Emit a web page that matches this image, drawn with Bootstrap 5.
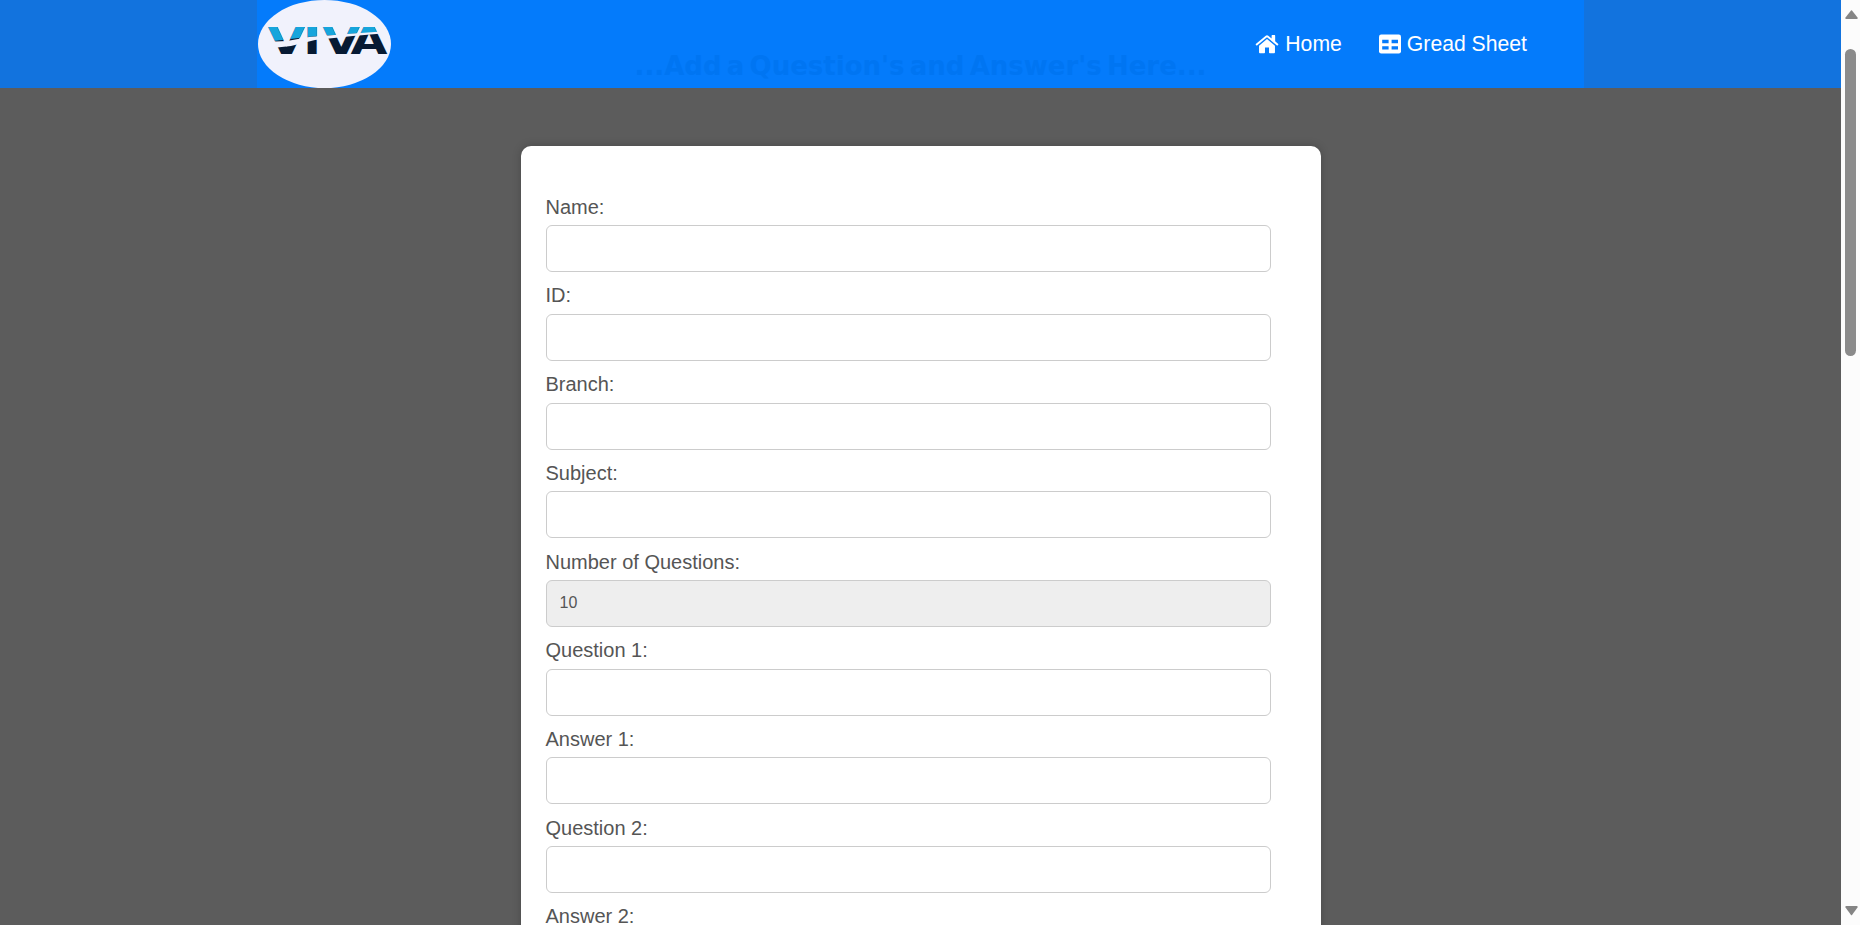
<!DOCTYPE html>
<html lang="en">
<head>
<meta charset="utf-8">
<meta name="viewport" content="width=device-width, initial-scale=1">
<title>Viva</title>
<link href="https://cdn.jsdelivr.net/npm/bootstrap@5.3.0/dist/css/bootstrap.min.css" rel="stylesheet">
<style>
html, body { height: 100%; }
body { font-family: "Liberation Sans", Arial, sans-serif; background: #5c5c5c; color: #555; overflow: hidden; }
.topbar { height: 88px; background: #1273de; }
.topbar-inner { width: 1327px; background: #047bfb; padding-right: 57px; overflow: hidden; }
.topbar .nav-link { color: #fff; font-size: 21.2px; line-height: 24px; gap: 6px; padding: 0; }
.topbar .nav { gap: 37px; }
.page-heading { top: 48px; left: 0; right: 0; font: bold 26px/36px "DejaVu Sans", sans-serif; word-spacing: -3.8px; color: #0075f2; white-space: nowrap; text-align: center; }
.question-card { width: 800px; height: 1900px; margin-top: 58px; padding: 48.8px 50px 0 25px; border-radius: 10px; background: #fff; box-shadow: 0 0 10px rgba(0,0,0,.2); }
.field { height: 88.7px; }
.field label { font-size: 20px; line-height: 24px; margin-bottom: 6.4px; display: block; }
.field .form-control { height: 47px; border: 1px solid #ccc; border-radius: 6px; padding: 0 13px; font-size: 16px; color: #555; }
.field .form-control:disabled { background: #eee; }
.scroll-rail { width: 19px; background: #fcfcfc; padding: 10px 4px 7px; }
.scroll-thumb { width: 11px; height: 307px; margin-top: 30px; border-radius: 6px; background: #8b8b8b; }
</style>
</head>
<body class="d-flex">
<div class="flex-grow-1 overflow-hidden">
  <header class="topbar d-flex justify-content-center">
    <div class="topbar-inner position-relative d-flex align-items-center justify-content-between">
      <div class="page-heading position-absolute">...Add a Question's and Answer's Here...</div>
      <a href="#" class="position-relative" aria-label="Viva">
        <svg class="d-block" width="134" height="88" viewBox="0 0 134 88">
          <defs><clipPath id="upper"><path d="M0 0H134V32L90 34L50 37L0 43Z"/></clipPath></defs>
          <ellipse cx="67.5" cy="44" rx="66.5" ry="44" fill="#f1f2fc"/>
          <g font-family="DejaVu Sans" font-weight="bold" font-size="37">
            <g fill="#071a33" transform="translate(0 54) scale(1.29 1)"><text x="8.5 35.8 50.9 72.5">VIVA</text></g>
            <g clip-path="url(#upper)"><g fill="#16a5dc" transform="translate(0 54) scale(1.29 1)"><text x="8.5 35.8 50.9 72.5">VIVA</text></g></g>
          </g>
          <path d="M6 42L30 41L52 37L90 34L131 31V33L96 36L58 40L34 46L6 49Z" fill="#f1f2fc"/>
        </svg>
      </a>
      <nav class="nav position-relative">
        <a href="#" class="nav-link d-flex align-items-center">
          <svg width="24" height="20" viewBox="0 0 25 20" fill="#fff"><path d="M12.5 4.9 4.2 11.8V18.7Q4.2 19.6 5.1 19.6H9.6Q10.4 19.6 10.4 18.8V13.7H14.6V18.8Q14.6 19.6 15.4 19.6H19.9Q20.8 19.6 20.8 18.7V11.8Z"/><path d="M.5 10.2 11.2 1.3Q12.5.3 13.8 1.3L17.3 4.2V1.3Q17.3.7 17.9.7H20.4Q21 .7 21 1.3V7.2L24.5 10.2 23.2 11.7 12.5 2.9 1.8 11.7Z"/></svg>
          Home</a>
        <a href="#" class="nav-link d-flex align-items-center">
          <svg width="22" height="20" viewBox="0 0 22 20"><rect y=".5" width="22" height="19" rx="2.2" fill="#fff"/><path d="M3.2 5.8H9.6V9.2H3.2ZM12.6 5.8H19V9.2H12.6ZM3.2 12.2H9.6V15.6H3.2ZM12.6 12.2H19V15.6H12.6Z" fill="#047bfb"/></svg>
          Gread Sheet</a>
      </nav>
    </div>
  </header>
  <main class="question-card mx-auto">
    <div class="field"><label for="name">Name:</label><input id="name" class="form-control"></div>
    <div class="field"><label for="sid">ID:</label><input id="sid" class="form-control"></div>
    <div class="field"><label for="branch">Branch:</label><input id="branch" class="form-control"></div>
    <div class="field"><label for="subject">Subject:</label><input id="subject" class="form-control"></div>
    <div class="field"><label for="count">Number of Questions:</label><input id="count" class="form-control" value="10" disabled></div>
    <div class="field"><label for="q1">Question 1:</label><input id="q1" class="form-control"></div>
    <div class="field"><label for="a1">Answer 1:</label><input id="a1" class="form-control"></div>
    <div class="field"><label for="q2">Question 2:</label><input id="q2" class="form-control"></div>
    <div class="field"><label for="a2">Answer 2:</label><input id="a2" class="form-control"></div>
  </main>
</div>
<div class="scroll-rail d-flex flex-column flex-shrink-0">
  <svg class="flex-shrink-0" width="13" height="9" viewBox="0 0 13 9"><path d="M6 .5Q6.5 0 7 .5L12.5 7.5Q13 9 12 9H1Q0 9 .5 7.5Z" fill="#858585"/></svg>
  <div class="scroll-thumb"></div>
  <svg class="mt-auto flex-shrink-0" width="13" height="12" viewBox="0 0 13 12"><path d="M1 0H12Q13 0 12.5 1.5L7 9Q6.5 9.5 6 9L.5 1.5Q0 0 1 0Z" fill="#858585"/></svg>
</div>
<script src="https://cdn.jsdelivr.net/npm/bootstrap@5.3.0/dist/js/bootstrap.bundle.min.js"></script>
</body>
</html>
